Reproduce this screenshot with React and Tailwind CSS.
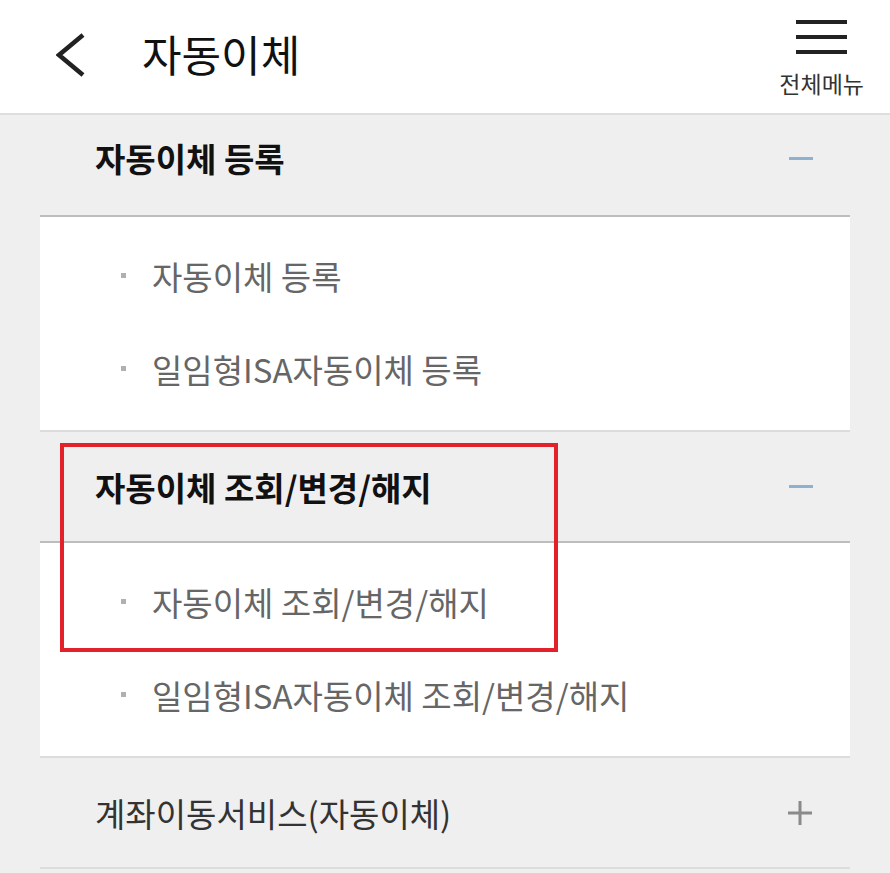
import React from "react";

const groups = [
  {
    title: "자동이체 등록",
    open: true,
    first: true,
    items: ["자동이체 등록", "일임형ISA자동이체 등록"],
  },
  {
    title: "자동이체 조회/변경/해지",
    open: true,
    items: ["자동이체 조회/변경/해지", "일임형ISA자동이체 조회/변경/해지"],
  },
  {
    title: "계좌이동서비스(자동이체)",
    open: false,
    items: [],
  },
];

function Minus() {
  return <span className="block w-[24px] h-[3px] bg-[#8eb1d0]" />;
}

function Plus() {
  return (
    <svg width="26" height="26" viewBox="0 0 26 26">
      <path d="M13 1v24M1 13h24" stroke="#8a8a8a" strokeWidth="3" />
    </svg>
  );
}

export default function App() {
  return (
    <div
      className="relative min-h-screen bg-[#efefef]"
      style={{ fontFamily: '"Noto Sans CJK KR", "Noto Sans", sans-serif' }}
    >
      {/* top bar */}
      <div className="h-[115px] bg-white border-b-2 border-[#dedede] flex items-start">
        <div className="pl-[56px] pt-[33px]">
          <svg width="30" height="44" viewBox="0 0 30 44">
            <path d="M27 2L3 22l24 20" fill="none" stroke="#222" strokeWidth="4.5" />
          </svg>
        </div>
        <h1 className="ml-[56px] mt-[28px] text-[43px] leading-[50px] text-[#111]">자동이체</h1>
        <div className="ml-auto mr-[26px] mt-[20px] flex flex-col items-center">
          <div className="w-[51px] flex flex-col gap-[11px]">
            <span className="block h-[4px] bg-[#222]" />
            <span className="block h-[4px] bg-[#222]" />
            <span className="block h-[4px] bg-[#222]" />
          </div>
          <span className="mt-[16px] text-[23px] leading-[26px] text-[#333]">전체메뉴</span>
        </div>
      </div>

      {/* accordion */}
      <div className="mx-[40px]">
        {groups.map((g) => (
          <div key={g.title}>
            <div
              className={
                g.first
                  ? "h-[102px] pb-[14px] flex items-center justify-between pl-[55px] pr-[37px] border-b-2 border-[#bdbdbd]"
                  : g.open
                  ? "h-[111px] flex items-center justify-between pl-[55px] pr-[37px] border-b-2 border-[#bdbdbd]"
                  : "h-[111px] flex items-center justify-between pl-[55px] pr-[37px] border-b-2 border-[#dcdcdc]"
              }
            >
              <span
                className={
                  g.open
                    ? "text-[33px] leading-[40px] font-bold text-[#111]"
                    : "text-[33px] leading-[40px] text-[#333]"
                }
              >
                {g.title}
              </span>
              {g.open ? <Minus /> : <Plus />}
            </div>
            {g.open && (
              <div className="bg-white pt-[12px] pb-[15px] border-b-2 border-[#dcdcdc]">
                {g.items.map((it) => (
                  <div key={it} className="h-[93px] flex items-center">
                    <span className="ml-[81px] w-[5px] h-[5px] bg-[#b0b0b0]" />
                    <span className="ml-[26px] text-[33px] leading-[40px] text-[#666]">{it}</span>
                  </div>
                ))}
              </div>
            )}
          </div>
        ))}
      </div>

      {/* highlight annotation */}
      <div className="absolute left-[60px] top-[443px] w-[498px] h-[209px] border-4 border-[#e3212b]" />
    </div>
  );
}
